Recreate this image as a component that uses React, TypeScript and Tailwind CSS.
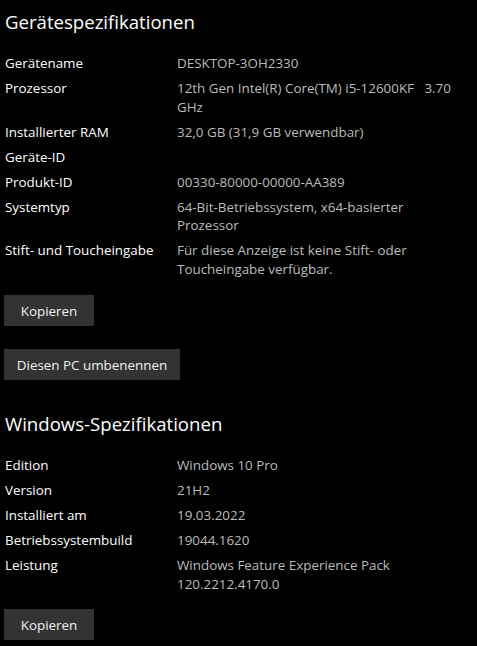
const deviceSpecs: { label: string; value: string[] }[] = [
  { label: "Gerätename", value: ["DESKTOP-3OH2330"] },
  { label: "Prozessor", value: ["12th Gen Intel(R) Core(TM) i5-12600KF   3.70", "GHz"] },
  { label: "Installierter RAM", value: ["32,0 GB (31,9 GB verwendbar)"] },
  { label: "Geräte-ID", value: [""] },
  { label: "Produkt-ID", value: ["00330-80000-00000-AA389"] },
  { label: "Systemtyp", value: ["64-Bit-Betriebssystem, x64-basierter", "Prozessor"] },
  { label: "Stift- und Toucheingabe", value: ["Für diese Anzeige ist keine Stift- oder", "Toucheingabe verfügbar."] },
];

const windowsSpecs: { label: string; value: string[] }[] = [
  { label: "Edition", value: ["Windows 10 Pro"] },
  { label: "Version", value: ["21H2"] },
  { label: "Installiert am", value: ["19.03.2022"] },
  { label: "Betriebssystembuild", value: ["19044.1620"] },
  { label: "Leistung", value: ["Windows Feature Experience Pack", "120.2212.4170.0"] },
];

const SpecList = ({ rows }: { rows: { label: string; value: string[] }[] }) => (
  <div className="grid grid-cols-[172px_1fr] gap-y-[6.5px] text-[13.4px] leading-[18.5px]">
    {rows.map((row) => (
      <div key={row.label} className="contents">
        <div className="text-white">{row.label}</div>
        <div className="text-[#bcbcbc] min-h-[18.5px]">
          {row.value.map((line, i) => (
            <div key={i} className="whitespace-pre">
              {line}
            </div>
          ))}
        </div>
      </div>
    ))}
  </div>
);

const Button = ({ children, width }: { children: React.ReactNode; width: string }) => (
  <button className={`${width} h-[31px] bg-[#333333] text-[#f0f0f0] text-[13.4px] leading-[18px] whitespace-nowrap`}>
    {children}
  </button>
);

export default function App() {
  return (
    <div
      className="w-[477px] h-[646px] bg-black text-white pl-[4px] pt-[8px] overflow-hidden"
      style={{ fontFamily: '"Open Sans", "Noto Sans", sans-serif' }}
    >
      <h1 className="text-[18.6px] leading-[28px] pl-[1px]">Gerätespezifikationen</h1>
      <div className="mt-[18px] pl-[1px]">
        <SpecList rows={deviceSpecs} />
      </div>
      <div className="mt-[17px] flex">
        <Button width="w-[90px]">Kopieren</Button>
      </div>
      <div className="mt-[23px] flex">
        <Button width="w-[176px]">Diesen PC umbenennen</Button>
      </div>
      <h1 className="mt-[30px] text-[18.6px] leading-[28px] pl-[1px]">Windows-Spezifikationen</h1>
      <div className="mt-[18px] pl-[1px]">
        <SpecList rows={windowsSpecs} />
      </div>
      <div className="mt-[16px] flex">
        <Button width="w-[90px]">Kopieren</Button>
      </div>
    </div>
  );
}
